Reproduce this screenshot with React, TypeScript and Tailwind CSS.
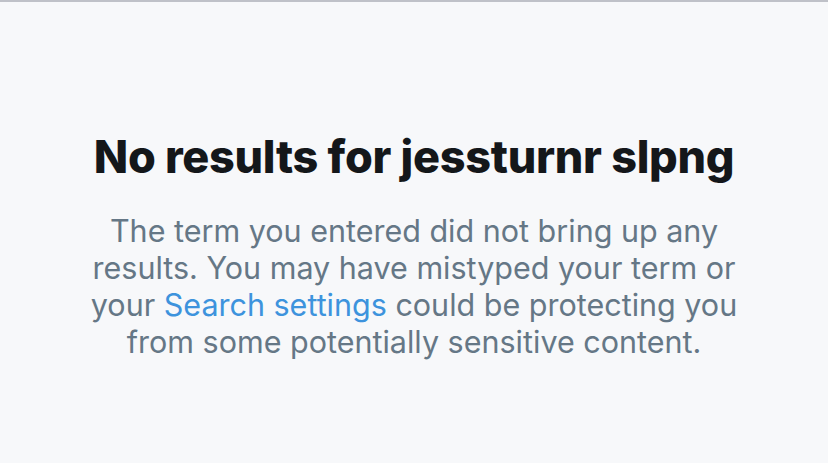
export default function App() {
    return (
        <div className="w-[828px] h-[463px] bg-[#f7f8fa] border-t-2 border-[#bfc1c8] flex flex-col items-center" style={{ fontFamily: "Inter, 'Noto Sans', sans-serif" }}>
            <div className="mt-[128px] flex flex-col items-center">
                <h1 className="text-[45px] leading-[54px] font-extrabold text-[#14171a] tracking-[-0.3px]">
                    No results for jessturnr slpng
                </h1>
                <p className="mt-[28px] text-[30.5px] leading-[37px] text-[#657786] text-center">
                    The term you entered did not bring up any<br />
                    results. You may have mistyped your term or<br />
                    your <span className="text-[#3d93dd]">Search settings</span> could be protecting you<br />
                    from some potentially sensitive content.
                </p>
            </div>
        </div>
    );
}
